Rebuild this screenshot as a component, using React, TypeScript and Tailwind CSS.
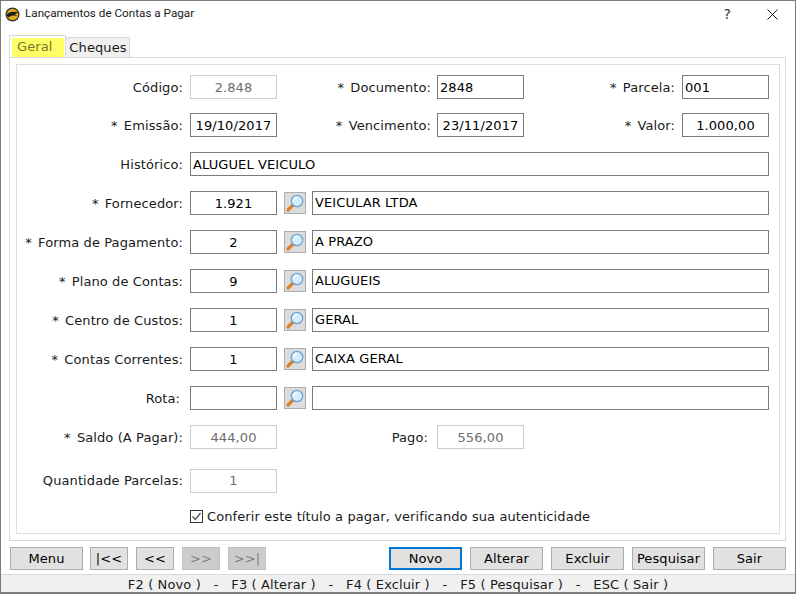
const font = "font-['DejaVu_Sans',sans-serif] tracking-[0.1px]";

function Field({
  value,
  width = "w-[87px]",
  align = "text-center",
  leading = "leading-[23px]",
  disabled = false,
}: {
  value: string;
  width?: string;
  align?: string;
  leading?: string;
  disabled?: boolean;
}) {
  return (
    <div
      className={`h-6 shrink-0 border whitespace-nowrap ${leading} ${width} ${align} ${
        disabled ? "border-[#cccccc] text-[#6d6d6d]" : "border-[#7a7a7a] text-black"
      } ${align === "text-left" ? "pl-[2px]" : ""}`}
    >
      {value}
    </div>
  );
}

function Label({ text, width, shift = "pt-[2px]" }: { text: string; width: string; shift?: string }) {
  const required = text.startsWith("* ");
  return (
    <div className={`shrink-0 text-right whitespace-nowrap text-[#1a1a1a] ${shift} ${width}`}>
      {required && <span className="mr-[2px]">* </span>}
      {required ? text.slice(2) : text}
    </div>
  );
}

function SearchButton() {
  return (
    <div className="ml-[7px] mr-[6px] mt-[1px] flex h-[22px] w-[22px] shrink-0 items-center justify-center self-start border border-[#adadad] bg-[#dcdcdc]">
      <svg width="20" height="20" viewBox="0 0 20 20">
        <path d="M8 12 L3 17" stroke="#d9822b" strokeWidth="3.2" strokeLinecap="round" />
        <circle cx="12" cy="8" r="5.7" fill="#d4ecfc" stroke="#6aa3cf" strokeWidth="1.3" />
        <path d="M8.8 8 A3.4 3.4 0 0 1 12 4.6" stroke="#ffffff" strokeWidth="1.3" fill="none" />
      </svg>
    </div>
  );
}

function LookupRow({ label, code, text, shift }: { label: string; code: string; text: string; shift?: string }) {
  return (
    <div className="mt-[15px] flex items-center">
      <Label text={label} width="w-[166px]" shift={shift} />
      <div className="ml-[7px]">
        <Field value={code} />
      </div>
      <SearchButton />
      <Field value={text} width="w-[457px]" align="text-left" leading="leading-[21px]" />
    </div>
  );
}

function NavButton({
  text,
  width = "w-[73px]",
  disabled = false,
  primary = false,
}: {
  text: string;
  width?: string;
  disabled?: boolean;
  primary?: boolean;
}) {
  return (
    <div
      className={`h-[23px] text-center ${width} ${
        primary
          ? "border-2 border-[#0078d7] bg-[#e1e1e1] leading-[20px] text-black"
          : disabled
            ? "border border-[#bfbfbf] bg-[#cccccc] leading-[22px] text-[#7f7f7f]"
            : "border border-[#adadad] bg-[#e1e1e1] leading-[22px] text-black"
      }`}
    >
      {text}
    </div>
  );
}

function Logo() {
  return (
    <svg width="15" height="15" viewBox="0 0 15 15">
      <circle cx="7.5" cy="7.5" r="7" fill="#2b2b2b" />
      <circle cx="7.5" cy="7.5" r="5.8" fill="#e0a81c" />
      <path d="M1.5 8 C4 4.5 9 4 13.5 5.5 L10 7 L12 9 C8.5 8 6 8.5 3.5 10.5 Z" fill="#1c1c1c" />
    </svg>
  );
}

export default function App() {
  return (
    <div className={`flex h-[594px] w-[796px] flex-col overflow-hidden border border-b-2 border-[#7a7a7a] bg-white text-[13px] ${font}`}>
      {/* Title bar */}
      <div className="flex h-[26px] shrink-0 items-center pl-[4px]">
        <Logo />
        <span className="ml-[5px] font-['Roboto',sans-serif] text-[11.7px] tracking-normal text-[#1a1a1a]">
          Lançamentos de Contas a Pagar
        </span>
        <span className="ml-auto mr-[36px] text-[14px] text-[#333333]">?</span>
        <svg className="mr-[17px]" width="11" height="11" viewBox="0 0 11 11">
          <path d="M0.5 0.5 L10.5 10.5 M10.5 0.5 L0.5 10.5" stroke="#1a1a1a" strokeWidth="1" />
        </svg>
      </div>

      {/* Tabs */}
      <div className="ml-[8px] mt-[8px] flex h-[22px] shrink-0 items-end">
        <div className="h-[22px] w-[57px] border border-b-0 border-[#d9d9d9] bg-white p-[2px] pb-0">
          <div className="h-[20px] w-[52px] bg-[#ffff66] pl-[5px] leading-[18px] text-[#77772a]">Geral</div>
        </div>
        <div className="h-5 w-[64px] border border-b-0 border-l-0 border-[#d9d9d9] bg-[#f0f0f0] pl-[1px] text-center leading-[20px] text-[#1a1a1a]">
          Cheques
        </div>
      </div>

      {/* Tab panel */}
      <div className="ml-[8px] h-[484px] w-[777px] shrink-0 border border-[#d9d9d9] p-[6px]">
        <div className="h-[470px] w-[764px] border border-[#dcdcdc] pt-[10px]">
          <div className="flex items-center">
            <Label text="Código:" width="w-[166px]" />
            <div className="ml-[7px]"><Field value="2.848" disabled /></div>
            <Label text="* Documento:" width="w-[154px]" />
            <div className="ml-[6px]"><Field value="2848" align="text-left" /></div>
            <Label text="* Parcela:" width="w-[151px]" />
            <div className="ml-[7px]"><Field value="001" align="text-left" /></div>
          </div>
          <div className="mt-[14px] flex items-center">
            <Label text="* Emissão:" width="w-[166px]" />
            <div className="ml-[7px]"><Field value="19/10/2017" /></div>
            <Label text="* Vencimento:" width="w-[154px]" />
            <div className="ml-[6px]"><Field value="23/11/2017" /></div>
            <Label text="* Valor:" width="w-[151px]" />
            <div className="ml-[7px]"><Field value="1.000,00" /></div>
          </div>
          <div className="mt-[15px] flex items-center">
            <Label text="Histórico:" width="w-[166px]" />
            <div className="ml-[7px]"><Field value="ALUGUEL VEICULO" width="w-[579px]" align="text-left" /></div>
          </div>

          <LookupRow label="* Fornecedor:" code="1.921" text="VEICULAR LTDA" />
          <LookupRow label="* Forma de Pagamento:" code="2" text="A PRAZO" />
          <LookupRow label="* Plano de Contas:" code="9" text="ALUGUEIS" />
          <LookupRow label="* Centro de Custos:" code="1" text="GERAL" />
          <LookupRow label="* Contas Correntes:" code="1" text="CAIXA GERAL" />
          <LookupRow label="Rota:" code="" text="" shift="pt-[2px] pr-[3px]" />

          <div className="mt-[15px] flex items-center">
            <Label text="* Saldo (A Pagar):" width="w-[166px]" />
            <div className="ml-[7px]"><Field value="444,00" disabled /></div>
            <Label text="Pago:" width="w-[154px]" shift="pt-[2px] pr-[3px]" />
            <div className="ml-[6px]"><Field value="556,00" disabled /></div>
          </div>
          <div className="mt-[20px] flex items-center">
            <Label text="Quantidade Parcelas:" width="w-[166px]" shift="pt-0" />
            <div className="ml-[7px]"><Field value="1" disabled leading="leading-[21px]" /></div>
          </div>
          <div className="ml-[173px] mt-[14px] flex items-center">
            <div className="flex h-[13px] w-[13px] items-center justify-center border border-[#333333] bg-white">
              <svg width="11" height="11" viewBox="0 0 11 11">
                <path d="M1.5 5.5 L4.3 8.5 L9.5 2" stroke="#555555" strokeWidth="1.4" fill="none" />
              </svg>
            </div>
            <span className="ml-[4px] whitespace-nowrap text-[#1a1a1a]">Conferir este título a pagar, verificando sua autenticidade</span>
          </div>
        </div>
      </div>

      {/* Buttons */}
      <div className="ml-[9px] mt-[6px] flex h-[23px] shrink-0 text-[#1a1a1a]">
        <NavButton text="Menu" />
        <div className="ml-[7px] flex gap-[8px]">
          <NavButton text="|<<" width="w-[38px]" />
          <NavButton text="<<" width="w-[38px]" />
          <NavButton text=">>" width="w-[38px]" disabled />
          <NavButton text=">>|" width="w-[38px]" disabled />
        </div>
        <div className="ml-[123px] flex gap-[8px]">
          <NavButton text="Novo" primary />
          <NavButton text="Alterar" />
          <NavButton text="Excluir" />
          <NavButton text="Pesquisar" />
          <NavButton text="Sair" />
        </div>
      </div>

      {/* Status bar */}
      <div className="mt-[4px] flex h-[18px] shrink-0 items-center justify-center whitespace-pre border-t border-[#d9d9d9] bg-[#f0f0f0] pt-[3px] tracking-[0.13px] text-[#1a1a1a]">
        F2 ( Novo )   -   F3 ( Alterar )   -   F4 ( Excluir )   -   F5 ( Pesquisar )   -   ESC ( Sair )
      </div>
    </div>
  );
}
